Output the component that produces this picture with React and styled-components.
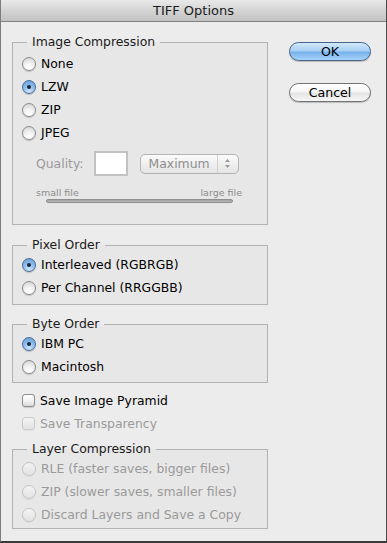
import styled, { createGlobalStyle } from 'styled-components';

const GlobalStyle = createGlobalStyle`
  html, body { margin: 0; padding: 0; background: #2e2e2e; }
  body {
    font-family: "DejaVu Sans", "Liberation Sans", sans-serif;
    font-size: 12.4px;
    color: #000;
  }
`;

const Window = styled.div`
  width: 385px;
  height: 541px;
  background: #ececec;
  border-left: 1px solid #7c7c7c;
  border-right: 1px solid #4a4a4a;
  border-bottom: 2px solid #3a3a3a;
  display: flex;
  flex-direction: column;
  overflow: hidden;
`;

const TitleBar = styled.div`
  height: 21px;
  flex: none;
  border-bottom: 1px solid #808080;
  background: linear-gradient(#e9e9e9, #d4d4d4 50%, #c2c2c2);
  display: flex;
  align-items: center;
  justify-content: center;
  font-size: 13px;
  color: #1a1a1a;
`;

const Body = styled.div`
  display: flex;
  padding: 12px 0 0 11px;
  gap: 21px;
`;

const LeftCol = styled.div`
  width: 256px;
  display: flex;
  flex-direction: column;
`;

const RightCol = styled.div`
  display: flex;
  flex-direction: column;
  gap: 22px;
  padding-top: 8px;
`;

const Group = styled.fieldset`
  margin: ${p => p.$top || 0}px 0 0;
  border: 1px solid #b2b2b2;
  padding: ${p => p.$pt || 0}px 8px ${p => p.$bottom ?? 4}px 9px;
  min-width: 0;
  background: rgba(0, 0, 0, 0.018);
`;

const Legend = styled.legend`
  margin-left: 5px;
  padding: 0 5px;
  line-height: 16px;
  color: #1a1a1a;
`;

const Row = styled.label`
  height: 23px;
  display: flex;
  align-items: center;
  gap: 5px;
  color: ${p => (p.$disabled ? '#9a9a9a' : '#000')};
`;

const RadioDot = styled.span`
  width: 14px;
  height: 14px;
  box-sizing: border-box;
  border-radius: 50%;
  flex: none;
  display: flex;
  align-items: center;
  justify-content: center;
  border: 1px solid ${p => (p.$disabled ? '#c4c4c4' : p.$checked ? '#4f6f98' : '#8c8c8c')};
  background: ${p =>
    p.$disabled
      ? 'linear-gradient(#f4f4f4, #e2e2e2)'
      : p.$checked
      ? 'radial-gradient(circle at 50% 85%, #cfe6fb 0%, #8fbfee 45%, #5e97d6 100%)'
      : 'radial-gradient(circle at 50% 85%, #ffffff 0%, #f1f1f1 45%, #cdcdcd 100%)'};
  box-shadow: 0 1px 1px rgba(0, 0, 0, ${p => (p.$disabled ? 0.05 : 0.18)});
  &::after {
    content: '';
    width: 4px;
    height: 4px;
    border-radius: 50%;
    background: #1b2636;
    display: ${p => (p.$checked ? 'block' : 'none')};
  }
`;

const CheckBox = styled.span`
  width: 13px;
  height: 13px;
  box-sizing: border-box;
  flex: none;
  border-radius: 3px;
  border: 1px solid ${p => (p.$disabled ? '#cacaca' : '#8e8e8e')};
  background: ${p =>
    p.$disabled ? 'linear-gradient(#f3f3f3, #e3e3e3)' : 'linear-gradient(#ffffff, #f3f3f3 50%, #d9d9d9)'};
  box-shadow: 0 1px 1px rgba(0, 0, 0, ${p => (p.$disabled ? 0.04 : 0.15)});
`;

const CheckRow = styled(Row)`
  padding-left: 10px;
`;

const QualityRow = styled.div`
  display: flex;
  align-items: center;
  margin: 7px 0 0 14px;
  height: 25px;
  color: #9a9a9a;
`;

const QualityInput = styled.div`
  width: 34px;
  height: 25px;
  box-sizing: border-box;
  margin-left: 10px;
  background: #fff;
  border: 2px solid #c2c2c2;
`;

const Select = styled.div`
  width: 99px;
  height: 20px;
  box-sizing: border-box;
  margin-left: 12px;
  border: 1px solid #b4b4b4;
  border-radius: 5px;
  background: linear-gradient(#fbfbfb, #efefef 50%, #e4e4e4);
  display: flex;
  align-items: center;
  color: #8e8e8e;
`;

const SelectText = styled.span`
  flex: 1;
  padding-left: 8px;
`;

const SelectArrows = styled.span`
  width: 20px;
  height: 100%;
  border-left: 1px solid #d0d0d0;
  display: flex;
  align-items: center;
  justify-content: center;
`;

const ScaleLabels = styled.div`
  display: flex;
  justify-content: space-between;
  margin: 11px 0 0 14px;
  width: 206px;
  font-size: 9.5px;
  color: #8c8c8c;
  line-height: 12px;
`;

const Track = styled.div`
  margin: 0 0 0 24px;
  width: 187px;
  height: 4px;
  border-radius: 2px;
  border: 1px solid #8f8f8f;
  background: linear-gradient(#9d9d9d, #bdbdbd);
  box-sizing: border-box;
`;

const Spacer = styled.div`
  height: ${p => p.$h}px;
`;

const Button = styled.button`
  width: 82px;
  height: 19px;
  border-radius: 10px;
  border: 1px solid ${p => (p.$primary ? '#45658f' : '#727272')};
  background: ${p =>
    p.$primary
      ? 'linear-gradient(#d3e8fb, #a9d0f4 45%, #78b2ea 55%, #a7d3fa)'
      : 'linear-gradient(#ffffff, #f5f5f5 45%, #e4e4e4 55%, #f7f7f7)'};
  box-shadow: 0 1px 1px rgba(0, 0, 0, 0.2);
  font-family: inherit;
  font-size: 12.6px;
  color: #000;
  padding: 0;
  display: flex;
  align-items: center;
  justify-content: center;
`;

const Radio = ({ label, checked, disabled }) => (
  <Row $disabled={disabled}>
    <RadioDot $checked={checked} $disabled={disabled} />
    {label}
  </Row>
);

const Check = ({ label, disabled }) => (
  <CheckRow $disabled={disabled}>
    <CheckBox $disabled={disabled} />
    {label}
  </CheckRow>
);

export default function App() {
  return (
    <>
      <GlobalStyle />
      <Window>
        <TitleBar>TIFF Options</TitleBar>
        <Body>
          <LeftCol>
            <Group $pt={2} $bottom={21}>
              <Legend>Image Compression</Legend>
              <Radio label="None" />
              <Radio label="LZW" checked />
              <Radio label="ZIP" />
              <Radio label="JPEG" />
              <QualityRow>
                Quality:
                <QualityInput />
                <Select>
                  <SelectText>Maximum</SelectText>
                  <SelectArrows>
                    <svg width="7" height="11" viewBox="0 0 7 11">
                      <path d="M3.5 1 L6 4 L1 4 Z" fill="#9a9a9a" />
                      <path d="M3.5 10 L6 7 L1 7 Z" fill="#9a9a9a" />
                    </svg>
                  </SelectArrows>
                </Select>
              </QualityRow>
              <ScaleLabels>
                <span>small file</span>
                <span>large file</span>
              </ScaleLabels>
              <Track />
            </Group>

            <Group $top={12} $bottom={5}>
              <Legend>Pixel Order</Legend>
              <Radio label="Interleaved (RGBRGB)" checked />
              <Radio label="Per Channel (RRGGBB)" />
            </Group>

            <Group $top={11}>
              <Legend>Byte Order</Legend>
              <Radio label="IBM PC" checked />
              <Radio label="Macintosh" />
            </Group>

            <Spacer $h={6} />
            <Check label="Save Image Pyramid" />
            <Check label="Save Transparency" disabled />
            <Spacer $h={6} />

            <Group $bottom={2}>
              <Legend>Layer Compression</Legend>
              <Radio label="RLE (faster saves, bigger files)" disabled />
              <Radio label="ZIP (slower saves, smaller files)" disabled />
              <Radio label="Discard Layers and Save a Copy" disabled />
            </Group>
          </LeftCol>
          <RightCol>
            <Button $primary>OK</Button>
            <Button>Cancel</Button>
          </RightCol>
        </Body>
      </Window>
    </>
  );
}
